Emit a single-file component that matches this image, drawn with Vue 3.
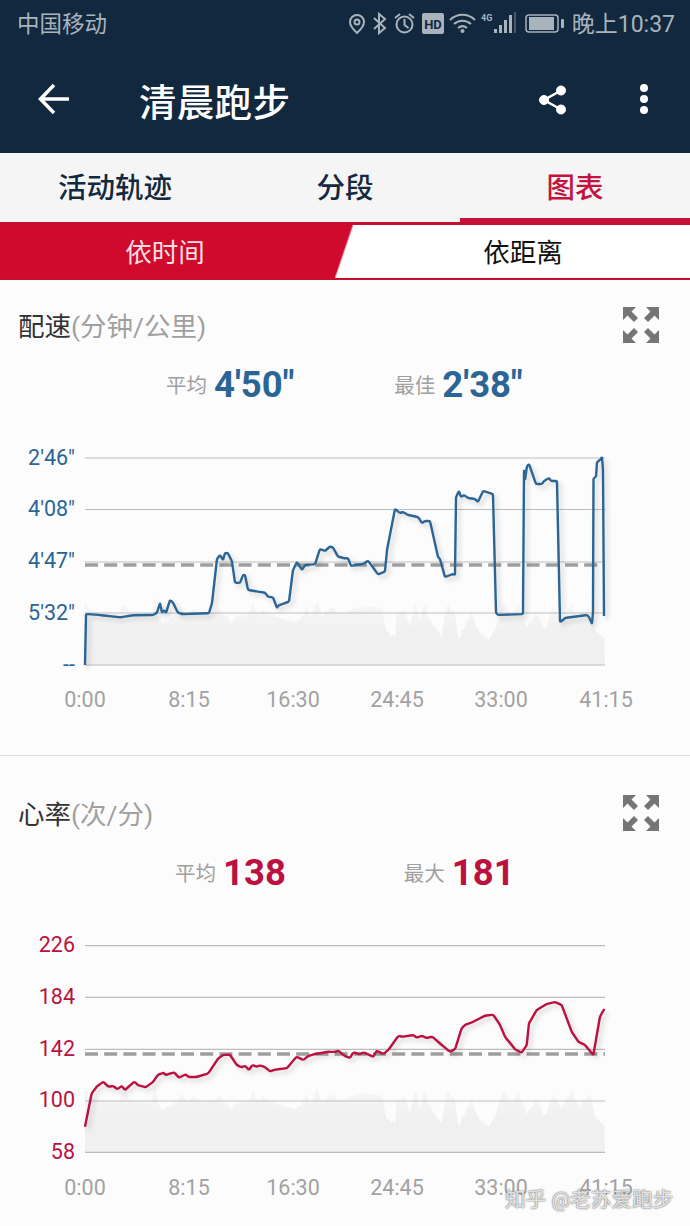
<script setup>
const z = (pts, ox, oy) => pts.map(([x, y]) => [+(ox + x / 3).toFixed(1), +(oy + y / 3).toFixed(1)])
const toLine = (pts) => pts.map(([x, y], i) => `${i ? 'L' : 'M'}${x} ${y}`).join(' ')
// Rounds each vertex only slightly, so that steep steps keep their corners
const smooth = (pts) => {
  const toward = (p, q) => {
    const dx = q[0] - p[0]
    const dy = q[1] - p[1]
    const len = Math.hypot(dx, dy) || 1
    const r = Math.min(1.5, len / 2)
    return [+(p[0] + (dx / len) * r).toFixed(1), +(p[1] + (dy / len) * r).toFixed(1)]
  }
  let d = `M${pts[0][0]} ${pts[0][1]}`
  for (let i = 1; i < pts.length - 1; i++) {
    const a = toward(pts[i], pts[i - 1])
    const b = toward(pts[i], pts[i + 1])
    d += ` L${a[0]} ${a[1]} Q${pts[i][0]} ${pts[i][1]} ${b[0]} ${b[1]}`
  }
  const last = pts[pts.length - 1]
  return `${d} L${last[0]} ${last[1]}`
}

const paceLine = [
  [85,665],[86,614],[100,615],[120,617.3],[133,615.3],[153,615],[157,612.7],[160,603],[162,612.7],[164,610],[166,613],[170,600],[173,602.7],[178,612.7],[182,614],[209,613.3],[212,603],[217,559],[220,555],[223,560],[225,553],[228,553],[232,561.7],[235,582.7],[240,583],[243,575],[245,575],[248,590],[253,590.7],[258,591.7],[265,592.7],[268,596.7],[273,597.3],[277,608],[278,605.7],[287,602.3],[289,601.7],[293,570],[297,562],[302,570],[305,565],[315,564.3],[320,549],[325,551],[330,546.5],[333,547.5],[338,556.7],[345,558.3],[348,558],[351,566],[355,565],[363,564],[368,560.7],[372,566],[378,574.3],[385,571.7],[387,550],[395,509],[400,513],[403,512],[408,515],[418,517],[422,523],[425,521],[430,521],[438,557],[440,559],[445,577],[453,574],[455,575],[456,497],[459,491],[461,497],[464,495],[468,498],[475,499],[478,502],[483,491],[493,494],[496,613],[498,615],[523,614],[524,470],[525,480],[527,466],[529,464],[536,484],[542,484],[544,481],[549,478],[551,481],[557,481],[560,622],[562,621],[565,618],[587,615],[589,617],[592,624],[593,612],[593.5,478],[596,477],[597,462],[600,460],[602,457],[603,470],[604,616]
]

const hrLine = [
  ...z([[255,590],[275,490],[290,470],[310,455],[325,470],[340,468],[352,478],[365,468],[375,480],[403,455],[415,466],[437,472],[460,455],[473,435],[490,428],[497,435],[522,427],[537,443],[557,433],[565,441],[590,441],[625,430],[655,385],[670,375],[690,374],[710,405],[725,412],[735,407],[747,420],[757,405],[770,410],[780,406],[795,412],[810,424],[830,418],[860,415],[890,380],[910,390],[925,378],[945,372],[960,370],[985,365],[1005,366],[1015,362],[1035,378]], 0, 930),
  ...z([[0,378],[15,384],[25,367],[45,373],[55,367],[85,380],[95,362],[115,372],[130,360],[160,318],[175,320],[205,315],[215,323],[230,317],[245,324],[262,320],[290,345],[315,365],[330,358],[350,295],[360,285],[385,275],[420,257],[445,254],[465,285],[480,320],[510,358],[530,368],[545,345],[552,280],[575,240],[605,222],[630,216],[650,225],[680,305],[700,335],[720,345],[745,375],[765,260],[778,237]], 345, 930)
]

const areaTop = [
  ...z([[15,30],[25,55],[60,72],[120,72],[130,40],[150,70],[215,78],[225,20],[235,80],[245,100],[290,75],[305,50],[320,75],[340,60],[370,75],[400,68],[420,60],[435,75],[455,98],[470,78],[510,72],[518,35],[530,72],[550,60],[575,72],[600,85],[640,95],[660,90],[680,50],[690,85],[712,30],[725,80],[755,50],[775,75],[795,65]], 80, 590),
  ...z([[0,515],[30,505],[60,500],[110,505],[125,575],[150,590],[155,520],[180,510],[195,560],[210,490],[225,540],[238,490],[255,540],[290,590],[305,495],[330,520],[340,600],[380,515],[400,575],[430,600],[450,570],[475,490],[500,530],[520,495],[545,560],[575,520],[600,570],[625,500],[650,545],[680,490],[700,540],[735,500],[750,570],[778,595]], 345, 440)
]
// Fine jagged detail along the area's upper edge
const denseArea = (() => {
  const out = []
  for (let i = 0; i < areaTop.length - 1; i++) {
    const [x0, y0] = areaTop[i]
    const [x1, y1] = areaTop[i + 1]
    const n = Math.max(1, Math.round((x1 - x0) / 2))
    for (let k = 0; k < n; k++) {
      const t = k / n
      const x = x0 + (x1 - x0) * t
      const noise = Math.sin(x * 1.9) * 1.2 + Math.sin(x * 4.7) * 1.2
      out.push([+x.toFixed(1), +(y0 + (y1 - y0) * t + noise).toFixed(1)])
    }
  }
  out.push(areaTop[areaTop.length - 1])
  return out
})()
const areaPath = (dy) => {
  const pts = denseArea.map(([x, y]) => [x, +(y + dy).toFixed(1)])
  return `${toLine(pts)} L605 ${665 + dy} L85 ${665 + dy} Z`
}

const xLabels = [
  { t: '0:00', x: 85 }, { t: '8:15', x: 189 }, { t: '16:30', x: 293 },
  { t: '24:45', x: 397 }, { t: '33:00', x: 501 }, { t: '41:15', x: 606 }
]

const charts = [
  {
    key: 'pace', name: '配速', unit: '(分钟/公里)', tone: 'blue', color: '#2a6595', view: '0 440 690 280',
    stats: [{ l: '平均', v: `4'50"` }, { l: '最佳', v: `2'38"` }],
    grid: [458, 509.5, 562, 613, 665], dash: 565,
    labels: [{ t: `2'46"`, y: 458 }, { t: `4'08"`, y: 509 }, { t: `4'47"`, y: 561 }, { t: `5'32"`, y: 613 }, { t: '--', y: 665 }],
    line: smooth(paceLine), area: areaPath(0), labelY: 707
  },
  {
    key: 'hr', name: '心率', unit: '(次/分)', tone: 'red', color: '#bc1140', view: '0 928 690 280',
    stats: [{ l: '平均', v: '138' }, { l: '最大', v: '181' }],
    grid: [945.7, 997.3, 1049.3, 1101, 1152.3], dash: 1054,
    labels: [{ t: '226', y: 945 }, { t: '184', y: 997 }, { t: '142', y: 1049 }, { t: '100', y: 1100 }, { t: '58', y: 1152 }],
    line: smooth(hrLine), area: areaPath(487), labelY: 1195
  }
]
</script>

<template>
  <div class="page">
    <header class="appbar">
      <div class="status">
        <span class="carrier">中国移动</span>
        <div class="status-right">
          <svg class="status-icons" width="224" height="48" viewBox="345 0 224 48" fill="none" stroke="#a9b3bc">
            <path d="M358 15a7 7 0 0 0-7 7c0 4.500 7 11 7 11s7-6.500 7-11a7 7 0 0 0-7-7z" stroke-width="2"/>
            <circle cx="358" cy="22" r="2.500" stroke-width="2"/>
            <path d="M375 18l11 10-6 5V14l6 5-11 10" stroke-width="2"/>
            <circle cx="405.500" cy="24.500" r="8" stroke-width="2"/>
            <path d="M405.500 19v6l4 3M396 18l5-4M415 18l-5-4" stroke-width="2"/>
            <rect x="423" y="13" width="22" height="21" rx="2" fill="#a9b3bc" stroke="none"/>
            <text x="434" y="29" class="hd">HD</text>
            <path d="M451 20c7-7 18-7 25 0M455 24c5-4.500 12-4.500 17 0M459 28c3-2.500 6-2.500 9 0" stroke-width="2"/>
            <circle cx="463.500" cy="31" r="2" fill="#a9b3bc" stroke="none"/>
            <text x="482" y="21" class="g4">4G</text>
            <g fill="#a9b3bc" stroke="none">
              <rect x="495" y="29" width="3" height="4"/>
              <rect x="500" y="25" width="3" height="8"/>
              <rect x="505" y="20" width="3" height="13"/>
              <rect x="510" y="15" width="3" height="18"/>
              <rect x="515" y="12" width="2" height="21" opacity=".35"/>
              <rect x="530" y="17" width="25" height="13"/>
              <rect x="562" y="19" width="3" height="9" rx="1"/>
            </g>
            <rect x="527" y="15" width="32" height="17" rx="3" stroke-width="1.500"/>
          </svg>
          <span class="time">晚上10:37</span>
        </div>
      </div>
      <div class="toolbar">
        <svg class="back" width="32" height="32" viewBox="0 0 32 32" fill="none" stroke="#fff" stroke-width="3.500">
          <path d="M31 16H3M16 2L2.500 16 16 30"/>
        </svg>
        <h1 class="title">清晨跑步</h1>
        <svg class="share" width="30" height="30" viewBox="0 0 30 30" fill="#fff" stroke="#fff">
          <circle cx="23" cy="5.500" r="4.500"/>
          <circle cx="6" cy="15" r="4.500"/>
          <circle cx="23" cy="24.500" r="4.500"/>
          <path d="M23 5.500L6 15l17 9.500" fill="none" stroke-width="2.500"/>
        </svg>
        <svg class="more" width="10" height="32" viewBox="0 0 10 32" fill="#fff">
          <circle cx="5" cy="5" r="4"/>
          <circle cx="5" cy="16" r="4"/>
          <circle cx="5" cy="27" r="4"/>
        </svg>
      </div>
    </header>

    <nav class="tabs">
      <span class="tab">活动轨迹</span>
      <span class="tab">分段</span>
      <span class="tab active">图表</span>
    </nav>

    <div class="segment">
      <span class="seg seg-on">依时间</span>
      <span class="seg seg-off">依距离</span>
    </div>

    <section v-for="c in charts" :key="c.key" class="card">
      <div class="card-head">
        <div class="card-title">{{ c.name }}<span class="unit">{{ c.unit }}</span></div>
        <svg class="expand" width="36" height="36" viewBox="0 0 36 36" fill="#757575">
          <path d="M0 0H13L8.500 4.500 15 11 11 15 4.500 8.500 0 13z"/>
          <path d="M0 0H13L8.500 4.500 15 11 11 15 4.500 8.500 0 13z" transform="matrix(-1 0 0 1 36 0)"/>
          <path d="M0 0H13L8.500 4.500 15 11 11 15 4.500 8.500 0 13z" transform="matrix(1 0 0 -1 0 36)"/>
          <path d="M0 0H13L8.500 4.500 15 11 11 15 4.500 8.500 0 13z" transform="matrix(-1 0 0 -1 36 36)"/>
        </svg>
      </div>
      <div class="stats" :class="c.tone">
        <div v-for="s in c.stats" :key="s.l" class="stat">
          <span class="stat-label">{{ s.l }}</span>
          <span class="stat-value">{{ s.v }}</span>
        </div>
      </div>
      <svg class="chart" width="690" height="280" :viewBox="c.view">
        <defs>
          <filter :id="`soft-${c.key}`" x="-5%" y="-5%" width="110%" height="110%">
            <feGaussianBlur stdDeviation="2"/>
          </filter>
          <filter :id="`edge-${c.key}`" x="-2%" y="-5%" width="104%" height="110%">
            <feGaussianBlur stdDeviation=".5"/>
          </filter>
          <linearGradient :id="`fade-${c.key}`" x1="0" y1="0" x2="0" y2="1">
            <stop offset="0" stop-color="#f6f6f6"/>
            <stop offset=".35" stop-color="#f3f3f3"/>
            <stop offset=".55" stop-color="#f0f0f0"/>
          </linearGradient>
        </defs>
        <path :d="c.area" :fill="`url(#fade-${c.key})`" :filter="`url(#edge-${c.key})`"/>
        <line v-for="g in c.grid" :key="g" x1="85" x2="605" :y1="g" :y2="g" stroke="#bdbdbd" stroke-width="1.200"/>
        <line x1="85" x2="605" :y1="c.dash" :y2="c.dash" stroke="#9e9e9e" stroke-width="3.500" stroke-dasharray="13 6.200"/>
        <path :d="c.line" fill="none" stroke="#000" stroke-opacity=".1" stroke-width="4" transform="translate(3 3)" :filter="`url(#soft-${c.key})`"/>
        <path :d="c.line" fill="none" :stroke="c.color" stroke-width="2.400" stroke-linejoin="round"/>
        <text v-for="l in c.labels" :key="l.t" x="75" :y="l.y + 7" class="y-label" :fill="c.color">{{ l.t }}</text>
        <text v-for="l in xLabels" :key="l.t" :x="l.x" :y="c.labelY" class="x-label">{{ l.t }}</text>
      </svg>
    </section>

    <div class="watermark">知乎 @老苏爱跑步</div>
  </div>
</template>

<style>
html, body { margin: 0; background: #fcfcfc; }
</style>

<style scoped>
.page {
  position: relative;
  width: 690px;
  height: 1226px;
  overflow: hidden;
  background: #fcfcfc;
  font-family: Roboto, "Noto Sans CJK SC", sans-serif;
}
.appbar {
  height: 153px;
  background: #12283e;
  box-shadow: 0 1px 3px rgba(0, 0, 0, .35);
  position: relative;
}
.status {
  height: 48px;
  display: flex;
  align-items: center;
  justify-content: space-between;
  padding: 0 15px 0 17px;
  color: #a9b3bc;
  font-size: 22.500px;
}
.carrier { margin-bottom: 4px; }
.status-right { display: flex; align-items: center; gap: 4px; }
.status-icons { display: block; }
.time { font-size: 23px; margin-bottom: 4px; }
.hd { font: 700 13px Roboto, sans-serif; fill: #12283e; stroke: none; text-anchor: middle; }
.g4 { font: 700 9px Roboto, sans-serif; fill: #a9b3bc; stroke: none; }
.toolbar {
  height: 105px;
  display: flex;
  align-items: center;
  padding: 0 41px 0 38px;
}
.back { margin-top: -4px; }
.title {
  margin: -2px 0 0 69px;
  flex: 1;
  color: #fff;
  font-size: 37.500px;
  font-weight: 500;
  letter-spacing: .3px;
}
.share { margin: -2px 71px 0 0; }
.more { margin-top: -3px; }
.tabs {
  height: 69px;
  display: grid;
  grid-template-columns: repeat(3, 230px);
  background: #f5f5f5;
  color: #13293f;
  font-size: 28.500px;
  font-weight: 500;
  position: relative;
}
.tab {
  display: flex;
  align-items: center;
  justify-content: center;
  padding-bottom: 4px;
  box-sizing: border-box;
}
.active {
  color: #c5123e;
  border-bottom: 4px solid #c5123e;
  padding-bottom: 0;
}
.segment {
  height: 58px;
  box-sizing: border-box;
  display: grid;
  grid-template-columns: 330px 360px;
  border-top: 3px solid #c5112f;
  border-bottom: 2px solid #c5112f;
  background: linear-gradient(to bottom right, #cf0a2c 0 calc(50% - 1px), #fff calc(50% + 1px)) 335px 0 / 18px 100% no-repeat,
    linear-gradient(to right, #cf0a2c 0 335px, #fff 335px);
  font-size: 26.500px;
}
.seg { display: flex; align-items: center; justify-content: center; padding-bottom: 3px; }
.seg-on { color: #f8dfe3; }
.seg-off { color: #111; padding-left: 26px; }
.card {
  border-bottom: 1px solid #dedede;
  margin-bottom: 12px;
  box-sizing: border-box;
  padding-top: 28px;
  height: 476px;
}
.card:last-of-type { border-bottom: 0; }
.card-head {
  height: 36px;
  display: flex;
  align-items: center;
  justify-content: space-between;
  padding: 0 31px 0 18px;
}
.card-title { color: #333; font-size: 26.500px; margin-bottom: 4px; }
.unit { color: #a0a0a0; }
.expand { display: block; margin-top: -3px; }
.stats {
  display: flex;
  height: 40px;
  margin-top: 20px;
  justify-content: flex-start;
}
.stat { display: flex; align-items: center; gap: 7px; }
.stats.blue { padding-left: 166px; gap: 100px; }
.stats.red { padding-left: 175px; gap: 118px; }
.stat-label { color: #a0a0a0; font-size: 20.500px; }
.stat-value { font-size: 36.500px; font-weight: 700; }
.blue .stat-value { color: #2a6595; }
.red .stat-value { color: #bc1140; }
.chart { display: block; margin-top: 36px; }
.y-label { font: 21.500px Roboto, sans-serif; text-anchor: end; }
.x-label { font: 21.500px Roboto, sans-serif; fill: #a2a2a2; text-anchor: middle; }
.watermark {
  position: absolute;
  left: 505px;
  top: 1183px;
  font-size: 20.700px;
  color: rgba(255, 255, 255, .8);
  text-shadow: 0 0 2px #777, 0 0 1px #777;
  white-space: nowrap;
}
</style>
